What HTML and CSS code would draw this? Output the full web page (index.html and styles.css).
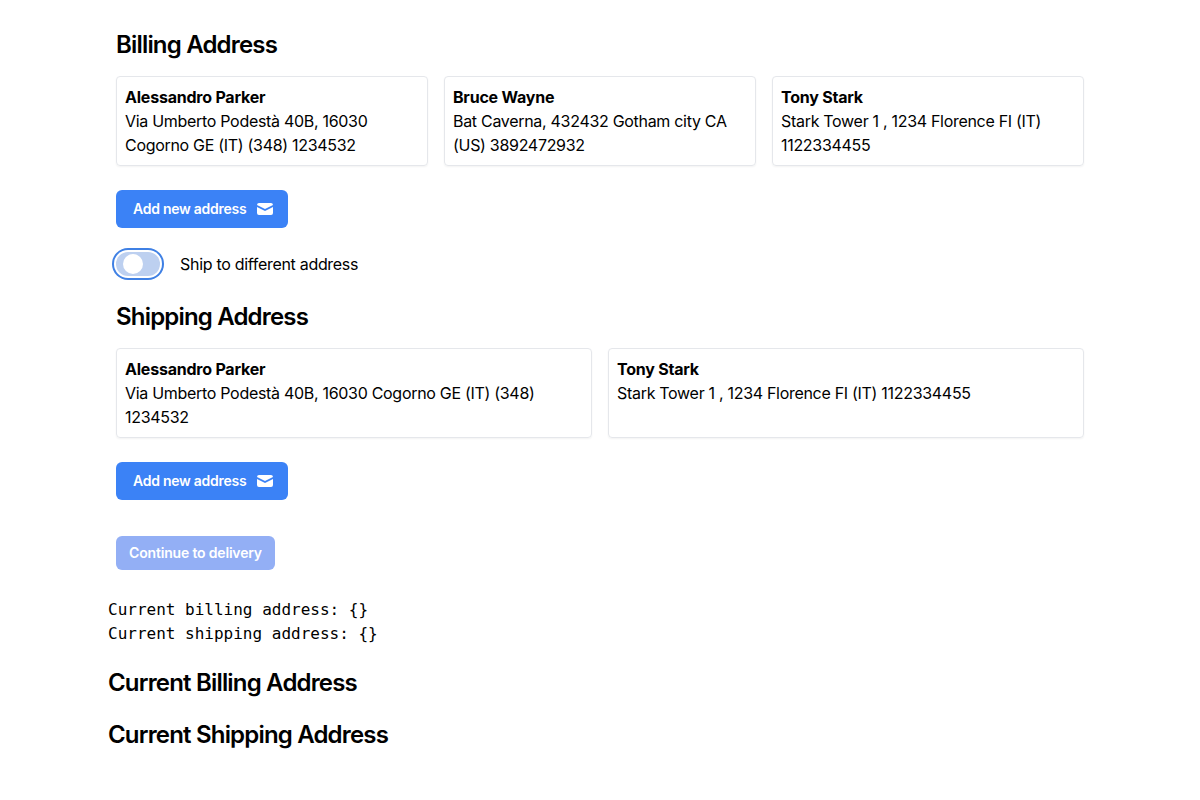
FILE: index.html
```html
<!DOCTYPE html>
<html lang="en">
<head>
<meta charset="utf-8">
<title>Checkout addresses</title>
<link rel="stylesheet" href="styles.css">
</head>
<body>
<main class="page">
  <div class="checkout">
    <h2 class="title">Billing Address</h2>
    <div class="cards cards-three">
      <div class="card"><p class="name">Alessandro Parker</p><p>Via Umberto Podestà 40B, 16030 Cogorno GE (IT) (348) 1234532</p></div>
      <div class="card"><p class="name">Bruce Wayne</p><p>Bat Caverna, 432432 Gotham city CA (US) 3892472932</p></div>
      <div class="card"><p class="name">Tony Stark</p><p>Stark Tower 1 , 1234 Florence FI (IT) 1122334455</p></div>
    </div>
    <button class="button add" type="button">Add new address
      <svg class="mail" viewBox="0 0 20 20" fill="currentColor"><path d="M2.003 5.884L10 9.882l7.997-3.998A2 2 0 0016 4H4a2 2 0 00-1.997 1.884z"/><path d="M18 8.118l-8 4-8-4V14a2 2 0 002 2h12a2 2 0 002-2V8.118z"/></svg>
    </button>
    <div class="switch-row">
      <button class="switch" type="button" role="switch" aria-checked="false" aria-label="Ship to different address"><span class="thumb"></span></button>
      <span>Ship to different address</span>
    </div>
    <h2 class="title">Shipping Address</h2>
    <div class="cards cards-two">
      <div class="card"><p class="name">Alessandro Parker</p><p>Via Umberto Podestà 40B, 16030 Cogorno GE (IT) (348) 1234532</p></div>
      <div class="card"><p class="name">Tony Stark</p><p>Stark Tower 1 , 1234 Florence FI (IT) 1122334455</p></div>
    </div>
    <button class="button add" type="button">Add new address
      <svg class="mail" viewBox="0 0 20 20" fill="currentColor"><path d="M2.003 5.884L10 9.882l7.997-3.998A2 2 0 0016 4H4a2 2 0 00-1.997 1.884z"/><path d="M18 8.118l-8 4-8-4V14a2 2 0 002 2h12a2 2 0 002-2V8.118z"/></svg>
    </button>
    <button class="button continue" type="button" disabled>Continue to delivery</button>
  </div>
  <pre class="state">Current billing address: {}
Current shipping address: {}</pre>
  <h2 class="title summary">Current Billing Address</h2>
  <h2 class="title summary">Current Shipping Address</h2>
</main>
</body>
</html>
```
FILE: styles.css
```css
* { box-sizing: border-box; margin: 0; }
body {
  background: #fff;
  color: #000;
  font-family: Inter, sans-serif;
  font-size: 16px;
  line-height: 24px;
  letter-spacing: -0.3px;
}
.page { width: 984px; margin: 0 auto; padding-top: 29px; }
.checkout { display: flex; flex-direction: column; align-items: flex-start; padding: 0 8px; }
.title { font-size: 24px; line-height: 32px; font-weight: 600; letter-spacing: -0.82px; }
.cards { display: grid; gap: 16px; width: 100%; margin: 15px 0 24px; }
.cards-three { grid-template-columns: repeat(3, 1fr); }
.cards-two { grid-template-columns: repeat(2, 1fr); }
.card { padding: 8px; border: 1px solid #e5e7eb; border-radius: 4px; box-shadow: 0 1px 2px rgba(0, 0, 0, 0.05); }
.name { font-weight: 700; letter-spacing: -0.22px; }
.button {
  display: inline-flex;
  align-items: center;
  border: 0;
  border-radius: 6px;
  color: #fff;
  font: 600 14px/20px Inter, sans-serif;
  letter-spacing: -0.26px;
  white-space: nowrap;
}
.add { width: 172px; height: 38px; padding: 0 13px 0 17px; justify-content: space-between; background: #3b82f6; }
.mail { width: 20px; height: 20px; }
.continue { width: 159px; height: 34px; margin-top: 36px; justify-content: center; padding: 0; letter-spacing: -0.18px; background: #93aff5; }
.switch-row { display: flex; align-items: center; gap: 20px; height: 24px; margin: 24px 0 25px; }
.switch {
  display: flex;
  align-items: center;
  width: 44px;
  height: 24px;
  padding: 0 0 0 6.5px;
  border: 0;
  border-radius: 12px;
  background: #bdd0f0;
  box-shadow: 0 0 0 2px #fff, 0 0 0 4px #3f80e4;
}
.thumb { width: 20px; height: 20px; border-radius: 50%; background: #fff; }
.state { margin: 28px 0 21px; font: 16px/24px "DejaVu Sans Mono", monospace; letter-spacing: 0; }
.summary { margin-bottom: 20px; }
```
